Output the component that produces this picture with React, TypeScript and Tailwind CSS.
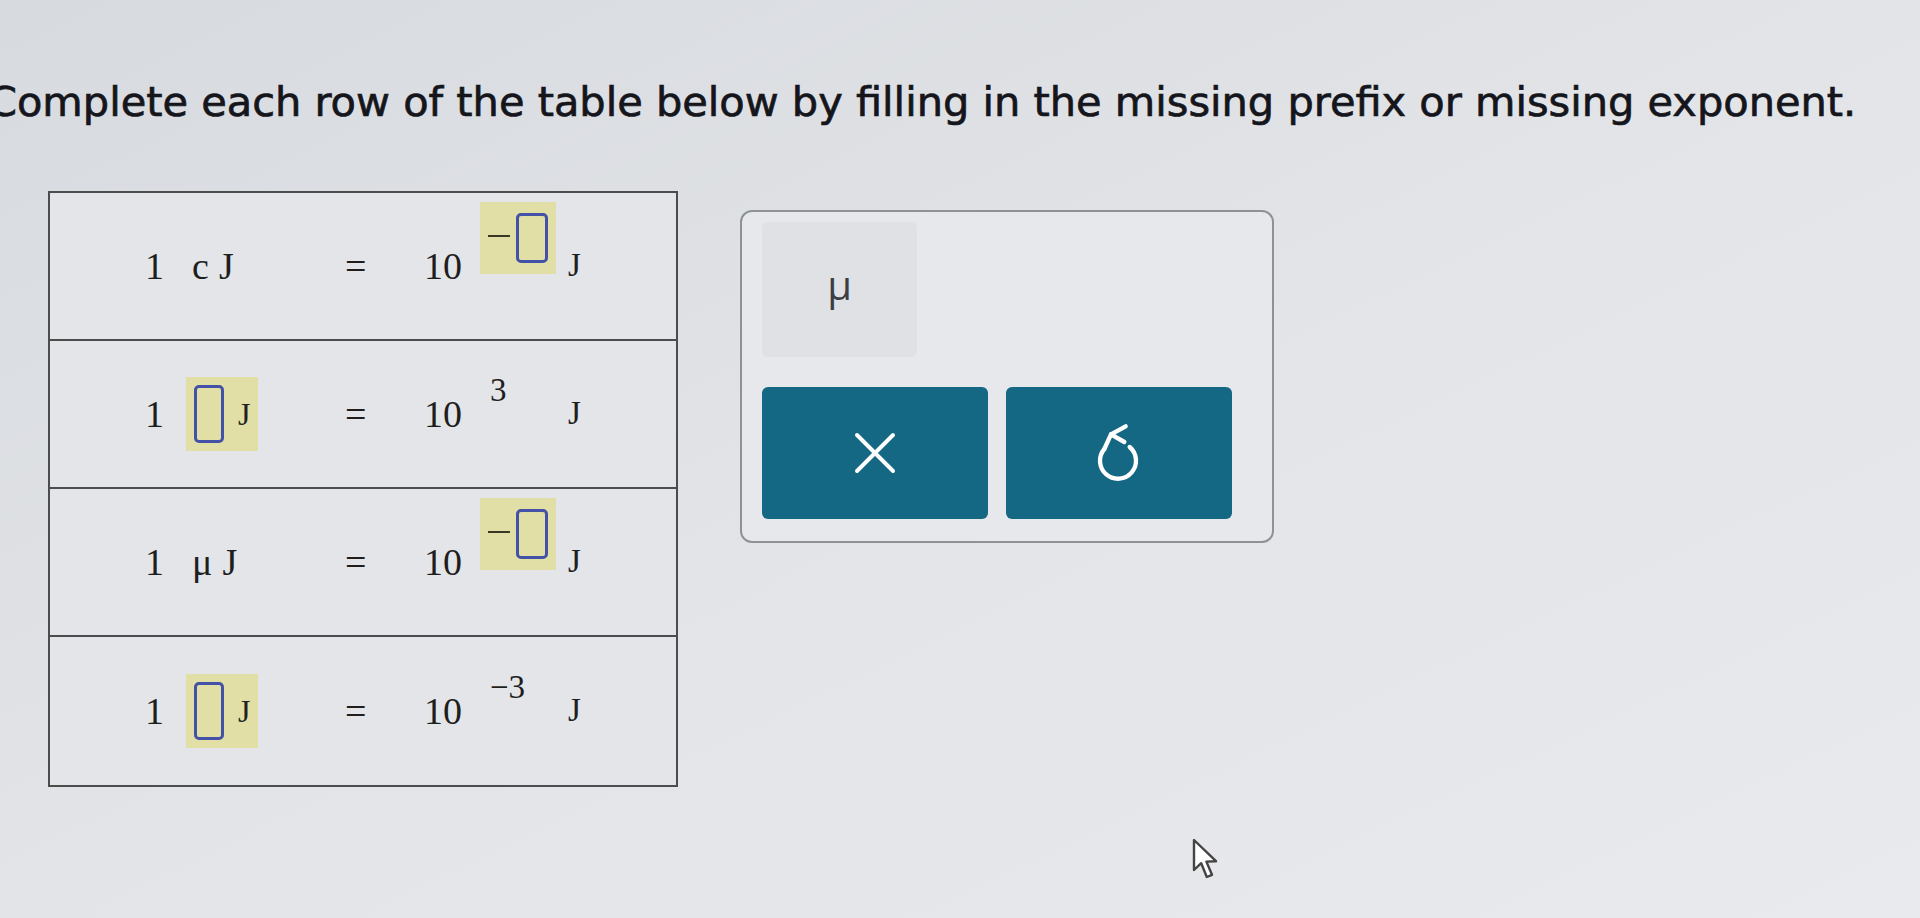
import { X } from 'lucide-react';

const serif = { fontFamily: '"Liberation Serif", "Times New Roman", serif' };

function Blank({ tall }: { tall?: boolean }) {
    return (
        <span
            className={
                tall
                    ? 'inline-block w-[30px] h-[58px] rounded-[5px] border-[3px] border-[#4352a6]'
                    : 'inline-block w-[32px] h-[50px] rounded-[5px] border-[3px] border-[#4352a6]'
            }
        />
    );
}

function ExpBlank() {
    return (
        <span className="flex items-center justify-center gap-[6px] w-[76px] h-[72px] bg-[#e2dfa6] mb-[56px]">
            <span className="block w-[22px] h-[2px] bg-[#3a3a22] mb-[4px]" />
            <Blank />
        </span>
    );
}

function PrefixBlank() {
    return (
        <span className="flex items-center gap-[14px] w-[72px] h-[74px] bg-[#e2dfa6] pl-[8px]">
            <Blank tall />
            <span className="text-[32px] text-[#222]">J</span>
        </span>
    );
}

function Sup({ children }: { children: React.ReactNode }) {
    return <span className="block w-[76px] pl-[10px] text-[33px] mb-[46px]">{children}</span>;
}

function Row({ prefix, exp }: { prefix: React.ReactNode; exp: React.ReactNode }) {
    return (
        <div className="flex items-center h-[148px] pl-[95px] text-[38px] text-[#1e1e1e]" style={serif}>
            <span className="w-[41px]">1</span>
            <span className="w-[159px] flex items-center">{prefix}</span>
            <span className="w-[79px]">=</span>
            <span className="w-[56px]">10</span>
            <span className="w-[88px] flex">{exp}</span>
            <span className="text-[33px]">J</span>
        </div>
    );
}

function UnitPrefix({ p }: { p: string }) {
    return (
        <span className="flex items-center gap-[10px] pl-[6px]">
            <span>{p}</span>
            <span>J</span>
        </span>
    );
}

function UndoIcon() {
    // undo arrow: "<" head on top, stem down into an open circle
    return (
        <svg width="80" height="80" viewBox="0 0 24 24" fill="none" stroke="white" strokeWidth="1.3" strokeLinecap="round" strokeLinejoin="round">
            <path d="M14 4 L9.6 6.4 L13.6 8.7" />
            <path d="M9.6 6.4 L7.6 10.8" />
            <path d="M7.6 10.8 A5.4 5.4 0 1 0 15.2 10.2" />
        </svg>
    );
}

export default function App() {
    return (
        <div
            className="relative min-h-[918px] w-full overflow-hidden bg-linear-to-br from-[#d7dadf] via-[#e2e4e7] to-[#e8eaed]"
            style={{ fontFamily: '"DejaVu Sans", Verdana, sans-serif' }}
        >
            <h1 className="pt-[78px] -ml-[12px] text-[41.5px] leading-[48px] font-normal text-[#15151c] whitespace-nowrap [-webkit-text-stroke:0.7px_#15151c]">
                Complete each row of the table below by filling in the missing prefix or missing exponent.
            </h1>

            <div className="flex items-start mt-[65px] pl-[48px]">
                <div className="w-[630px] border-2 border-[#4c4c4c] bg-[#e3e5e8] divide-y-2 divide-[#4c4c4c]">
                    <Row prefix={<UnitPrefix p="c" />} exp={<ExpBlank />} />
                    <Row prefix={<PrefixBlank />} exp={<Sup>3</Sup>} />
                    <Row prefix={<UnitPrefix p="μ" />} exp={<ExpBlank />} />
                    <Row prefix={<PrefixBlank />} exp={<Sup>−3</Sup>} />
                </div>

                <div className="ml-[62px] mt-[19px] w-[534px] rounded-[12px] border-2 border-[#8e9196] bg-[#e6e8eb] pl-[20px] pr-[32px] pt-[10px] pb-[22px]">
                    <div className="flex items-center justify-center w-[155px] h-[135px] pb-[10px] rounded-[6px] bg-[#dfe1e4] text-[40px] text-[#3b3f45]" style={{ fontFamily: '"Open Sans", sans-serif' }}>
                        μ
                    </div>
                    <div className="flex gap-[18px] mt-[30px]">
                        <button className="flex items-center justify-center w-[226px] h-[132px] rounded-[6px] bg-[#156884]">
                            <X className="w-[72px] h-[72px] text-white" strokeWidth={1.3} />
                        </button>
                        <button className="flex items-center justify-center w-[226px] h-[132px] rounded-[6px] bg-[#156884]">
                            <UndoIcon />
                        </button>
                    </div>
                </div>
            </div>

            <svg className="absolute left-[1192px] top-[838px]" width="30" height="44" viewBox="0 0 15 22" fill="white" stroke="#444" strokeWidth="1.2" strokeLinejoin="round">
                <path d="M1 1 L1 16 L4.6 12.6 L7.4 19.5 L10 18.4 L7.2 11.8 L12 11.6 Z" />
            </svg>
        </div>
    );
}
